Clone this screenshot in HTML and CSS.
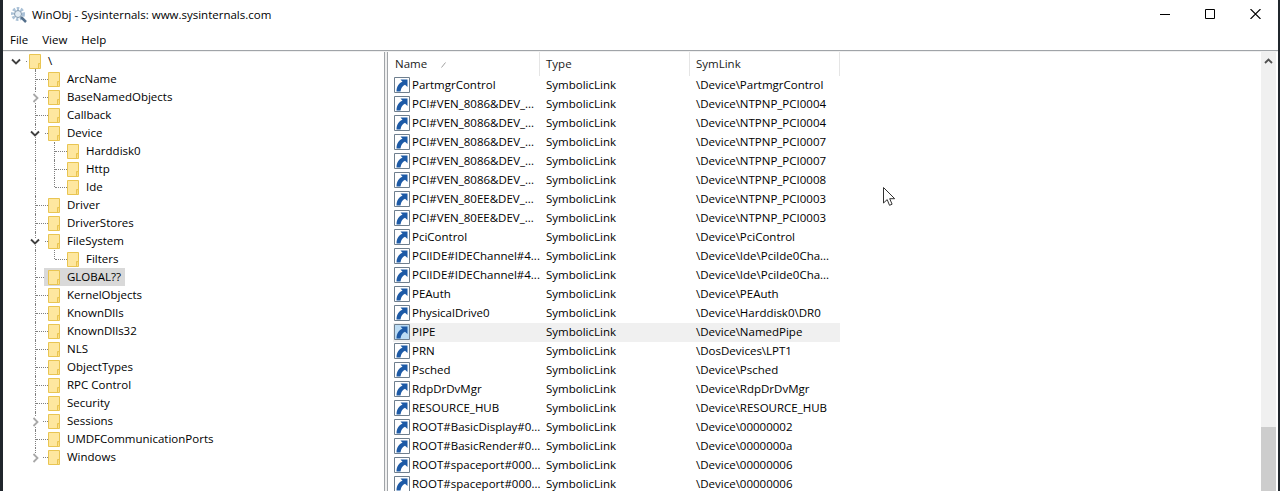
FILE: index.html
```html
<!DOCTYPE html>
<html lang="en">
<head>
    <meta charset="UTF-8">
    <title>WinObj - Sysinternals: www.sysinternals.com</title>
    <link rel="stylesheet" href="styles.css">
</head>
<body>

<svg class="sprites" width="0" height="0">
    <symbol id="folder" viewBox="0 0 12 15">
        <path d="M.5.5h11v14H.5z" fill="#fde390" stroke="#e9c552"/>
        <path d="M1 1h10v8H9v5H1z" fill="#fee79f"/>
        <path d="M9.5 14.5V9.500h2" fill="#fbd977" stroke="#e9c552"/>
    </symbol>
    <symbol id="open" viewBox="0 0 10 7">
        <path d="M1 1.500l4 4 4-4" fill="none" stroke="#404040" stroke-width="1.800"/>
    </symbol>
    <symbol id="closed" viewBox="0 0 7 10">
        <path d="M1.500 1l4 4-4 4" fill="none" stroke="#a8a8a8" stroke-width="1.800"/>
    </symbol>
    <symbol id="link" viewBox="0 0 16 16">
        <path d="M.5.5h15v15H.5z" fill="currentColor" stroke="#6f7f8e"/>
        <path d="M13.500 2.500V10L11 7.800C8.500 9 7 11 6.500 14.500h-4C2.500 9.500 5 6 8.500 4.800l-2-2.300z" fill="#1d5aa6"/>
    </symbol>
</svg>

<div class="window">
    <header class="titlebar">
        <svg class="app-icon" width="16" height="16" viewBox="0 0 16 16">
            <circle cx="7" cy="7" r="5.500" fill="none" stroke="#a9c0d6" stroke-width="3" stroke-dasharray="2.500 1.500"/>
            <circle cx="7" cy="7" r="3.500" fill="#e4edf4" stroke="#7d95ab"/>
            <path d="M10 10l5 5" stroke="#54708c" stroke-width="2.500"/>
        </svg>
        <span class="title">WinObj - Sysinternals: www.sysinternals.com</span>
        <div class="controls">
            <svg width="10" height="10" viewBox="0 0 10 10"><path d="M0 5.500h10" stroke="#000"/></svg>
            <svg width="10" height="10" viewBox="0 0 10 10"><path d="M.5.500h9v9h-9z" fill="none" stroke="#000"/></svg>
            <svg width="11" height="10" viewBox="0 0 11 10"><path d="M.5 0l10 10M10.500 0L.5 10" stroke="#000" stroke-width="1.100"/></svg>
        </div>
    </header>

    <nav class="menubar">
        <span>File</span>
        <span>View</span>
        <span>Help</span>
    </nav>

    <div class="panes">
        <ul class="tree">
            <li class="node-row"><span class="twig root"><svg class="chev-open"><use href="#open"/></svg></span><span class="node"><svg class="folder"><use href="#folder"/></svg>\</span></li>
            <li class="node-row"><span class="spacer"></span><span class="twig"></span><span class="node"><svg class="folder"><use href="#folder"/></svg>ArcName</span></li>
            <li class="node-row"><span class="spacer"></span><span class="twig"><svg class="chev-closed"><use href="#closed"/></svg></span><span class="node"><svg class="folder"><use href="#folder"/></svg>BaseNamedObjects</span></li>
            <li class="node-row"><span class="spacer"></span><span class="twig"></span><span class="node"><svg class="folder"><use href="#folder"/></svg>Callback</span></li>
            <li class="node-row"><span class="spacer"></span><span class="twig"><svg class="chev-open"><use href="#open"/></svg></span><span class="node"><svg class="folder"><use href="#folder"/></svg>Device</span></li>
            <li class="node-row"><span class="spacer"></span><span class="guide"></span><span class="twig"></span><span class="node"><svg class="folder"><use href="#folder"/></svg>Harddisk0</span></li>
            <li class="node-row"><span class="spacer"></span><span class="guide"></span><span class="twig"></span><span class="node"><svg class="folder"><use href="#folder"/></svg>Http</span></li>
            <li class="node-row"><span class="spacer"></span><span class="guide"></span><span class="twig last"></span><span class="node"><svg class="folder"><use href="#folder"/></svg>Ide</span></li>
            <li class="node-row"><span class="spacer"></span><span class="twig"></span><span class="node"><svg class="folder"><use href="#folder"/></svg>Driver</span></li>
            <li class="node-row"><span class="spacer"></span><span class="twig"></span><span class="node"><svg class="folder"><use href="#folder"/></svg>DriverStores</span></li>
            <li class="node-row"><span class="spacer"></span><span class="twig"><svg class="chev-open"><use href="#open"/></svg></span><span class="node"><svg class="folder"><use href="#folder"/></svg>FileSystem</span></li>
            <li class="node-row"><span class="spacer"></span><span class="guide"></span><span class="twig last"></span><span class="node"><svg class="folder"><use href="#folder"/></svg>Filters</span></li>
            <li class="node-row"><span class="spacer"></span><span class="twig"></span><span class="node selected"><svg class="folder"><use href="#folder"/></svg>GLOBAL??</span></li>
            <li class="node-row"><span class="spacer"></span><span class="twig"></span><span class="node"><svg class="folder"><use href="#folder"/></svg>KernelObjects</span></li>
            <li class="node-row"><span class="spacer"></span><span class="twig"></span><span class="node"><svg class="folder"><use href="#folder"/></svg>KnownDlls</span></li>
            <li class="node-row"><span class="spacer"></span><span class="twig"></span><span class="node"><svg class="folder"><use href="#folder"/></svg>KnownDlls32</span></li>
            <li class="node-row"><span class="spacer"></span><span class="twig"></span><span class="node"><svg class="folder"><use href="#folder"/></svg>NLS</span></li>
            <li class="node-row"><span class="spacer"></span><span class="twig"></span><span class="node"><svg class="folder"><use href="#folder"/></svg>ObjectTypes</span></li>
            <li class="node-row"><span class="spacer"></span><span class="twig"></span><span class="node"><svg class="folder"><use href="#folder"/></svg>RPC Control</span></li>
            <li class="node-row"><span class="spacer"></span><span class="twig"></span><span class="node"><svg class="folder"><use href="#folder"/></svg>Security</span></li>
            <li class="node-row"><span class="spacer"></span><span class="twig"><svg class="chev-closed"><use href="#closed"/></svg></span><span class="node"><svg class="folder"><use href="#folder"/></svg>Sessions</span></li>
            <li class="node-row"><span class="spacer"></span><span class="twig"></span><span class="node"><svg class="folder"><use href="#folder"/></svg>UMDFCommunicationPorts</span></li>
            <li class="node-row"><span class="spacer"></span><span class="twig last"><svg class="chev-closed"><use href="#closed"/></svg></span><span class="node"><svg class="folder"><use href="#folder"/></svg>Windows</span></li>
        </ul>

        <div class="splitter"></div>

        <section class="listview">
            <div class="list-body">
                <div class="list-head">
                    <div class="head-cell">Name<svg class="sort" width="5" height="6" viewBox="0 0 5 6"><path d="M.5 5.500l4-5" stroke="#a0a0a0"/></svg></div>
                    <div class="head-cell">Type</div>
                    <div class="head-cell">SymLink</div>
                </div>
                <div class="list-row"><div class="cell"><svg class="link"><use href="#link"/></svg>PartmgrControl</div><div class="cell">SymbolicLink</div><div class="cell">\Device\PartmgrControl</div></div>
                <div class="list-row"><div class="cell"><svg class="link"><use href="#link"/></svg>PCI#VEN_8086&amp;DEV_...</div><div class="cell">SymbolicLink</div><div class="cell">\Device\NTPNP_PCI0004</div></div>
                <div class="list-row"><div class="cell"><svg class="link"><use href="#link"/></svg>PCI#VEN_8086&amp;DEV_...</div><div class="cell">SymbolicLink</div><div class="cell">\Device\NTPNP_PCI0004</div></div>
                <div class="list-row"><div class="cell"><svg class="link"><use href="#link"/></svg>PCI#VEN_8086&amp;DEV_...</div><div class="cell">SymbolicLink</div><div class="cell">\Device\NTPNP_PCI0007</div></div>
                <div class="list-row"><div class="cell"><svg class="link"><use href="#link"/></svg>PCI#VEN_8086&amp;DEV_...</div><div class="cell">SymbolicLink</div><div class="cell">\Device\NTPNP_PCI0007</div></div>
                <div class="list-row"><div class="cell"><svg class="link"><use href="#link"/></svg>PCI#VEN_8086&amp;DEV_...</div><div class="cell">SymbolicLink</div><div class="cell">\Device\NTPNP_PCI0008</div></div>
                <div class="list-row"><div class="cell"><svg class="link"><use href="#link"/></svg>PCI#VEN_80EE&amp;DEV_...</div><div class="cell">SymbolicLink</div><div class="cell">\Device\NTPNP_PCI0003</div></div>
                <div class="list-row"><div class="cell"><svg class="link"><use href="#link"/></svg>PCI#VEN_80EE&amp;DEV_...</div><div class="cell">SymbolicLink</div><div class="cell">\Device\NTPNP_PCI0003</div></div>
                <div class="list-row"><div class="cell"><svg class="link"><use href="#link"/></svg>PciControl</div><div class="cell">SymbolicLink</div><div class="cell">\Device\PciControl</div></div>
                <div class="list-row"><div class="cell"><svg class="link"><use href="#link"/></svg>PCIIDE#IDEChannel#4...</div><div class="cell">SymbolicLink</div><div class="cell">\Device\Ide\PciIde0Cha...</div></div>
                <div class="list-row"><div class="cell"><svg class="link"><use href="#link"/></svg>PCIIDE#IDEChannel#4...</div><div class="cell">SymbolicLink</div><div class="cell">\Device\Ide\PciIde0Cha...</div></div>
                <div class="list-row"><div class="cell"><svg class="link"><use href="#link"/></svg>PEAuth</div><div class="cell">SymbolicLink</div><div class="cell">\Device\PEAuth</div></div>
                <div class="list-row"><div class="cell"><svg class="link"><use href="#link"/></svg>PhysicalDrive0</div><div class="cell">SymbolicLink</div><div class="cell">\Device\Harddisk0\DR0</div></div>
                <div class="list-row hot"><div class="cell"><svg class="link"><use href="#link"/></svg>PIPE</div><div class="cell">SymbolicLink</div><div class="cell">\Device\NamedPipe</div></div>
                <div class="list-row"><div class="cell"><svg class="link"><use href="#link"/></svg>PRN</div><div class="cell">SymbolicLink</div><div class="cell">\DosDevices\LPT1</div></div>
                <div class="list-row"><div class="cell"><svg class="link"><use href="#link"/></svg>Psched</div><div class="cell">SymbolicLink</div><div class="cell">\Device\Psched</div></div>
                <div class="list-row"><div class="cell"><svg class="link"><use href="#link"/></svg>RdpDrDvMgr</div><div class="cell">SymbolicLink</div><div class="cell">\Device\RdpDrDvMgr</div></div>
                <div class="list-row"><div class="cell"><svg class="link"><use href="#link"/></svg>RESOURCE_HUB</div><div class="cell">SymbolicLink</div><div class="cell">\Device\RESOURCE_HUB</div></div>
                <div class="list-row"><div class="cell"><svg class="link"><use href="#link"/></svg>ROOT#BasicDisplay#0...</div><div class="cell">SymbolicLink</div><div class="cell">\Device\00000002</div></div>
                <div class="list-row"><div class="cell"><svg class="link"><use href="#link"/></svg>ROOT#BasicRender#0...</div><div class="cell">SymbolicLink</div><div class="cell">\Device\0000000a</div></div>
                <div class="list-row"><div class="cell"><svg class="link"><use href="#link"/></svg>ROOT#spaceport#000...</div><div class="cell">SymbolicLink</div><div class="cell">\Device\00000006</div></div>
                <div class="list-row"><div class="cell"><svg class="link"><use href="#link"/></svg>ROOT#spaceport#000...</div><div class="cell">SymbolicLink</div><div class="cell">\Device\00000006</div></div>
            </div>

            <div class="scrollbar">
                <div class="scroll-up">
                    <svg width="9" height="6" viewBox="0 0 9 6"><path d="M1 5l3.500-3.500L8 5" fill="none" stroke="#505050" stroke-width="1.800"/></svg>
                </div>
                <div class="scroll-thumb"></div>
            </div>

            <!-- mouse pointer caught in the screenshot -->
            <svg class="pointer" width="12" height="20" viewBox="0 0 12 20">
                <path d="M.5.500v15.500l3.700-3.400 2.300 5.700 2.600-1.100-2.400-5.500h5z" fill="#fff" stroke="#333"/>
            </svg>
        </section>
    </div>
</div>

</body>
</html>
```

FILE: styles.css
```css
* {
    box-sizing: border-box;
}

body {
    margin: 0;
    height: 491px;
    overflow: hidden;
    padding: 0 2px 0 3px;
    background-color: #20262c;
    font-family: 'Open Sans', sans-serif;
    font-size: 11.5px;
    color: #000;
}

.sprites {
    display: block;
    height: 0;
}

.window {
    height: 491px;
    display: flex;
    flex-direction: column;
    background-color: white;
}

.titlebar {
    height: 30px;
    flex: none;
    display: flex;
    align-items: center;
    padding-left: 8px;
}

.app-icon {
    margin-right: 5px;
}

.title {
    flex: 1;
    margin-bottom: 2px;
}

.controls {
    display: flex;
    gap: 35px;
    padding-right: 17px;
    margin-bottom: 2px;
}

.menubar {
    height: 20px;
    flex: none;
    display: flex;
    gap: 14px;
    align-items: center;
    padding: 0 0 2px 7px;
}

.panes {
    flex: 1;
    min-height: 0;
    display: flex;
    border-top: 1px solid #a0a4a8;
    background-color: #f0f0f0;
    padding-top: 1px;
}

/* left side: object tree */

.tree {
    width: 381px;
    flex: none;
    list-style: none;
    margin: 0;
    padding: 0 0 0 4px;
    background-color: white;
    overflow: hidden;
}

.node-row {
    height: 18px;
    display: flex;
    white-space: nowrap;
}

.spacer,
.guide {
    width: 19px;
    flex: none;
    position: relative;
}

.twig {
    width: 22px;
    flex: none;
    position: relative;
}

.twig::before,
.guide::before {
    content: '';
    position: absolute;
    left: 9px;
    top: 0;
    bottom: 0;
    border-left: 1px dotted #808080;
}

.twig::after {
    content: '';
    position: absolute;
    left: 10px;
    right: 0;
    top: 9px;
    border-top: 1px dotted #808080;
}

.twig.last::before {
    bottom: 9px;
}

.twig.root::before {
    top: 16px;
    left: 28px;
}

.twig.root::after {
    left: 17px;
    right: 2px;
}

.chev-open,
.chev-closed {
    position: absolute;
    z-index: 1;
    background-color: white;
    box-shadow: 4px 0 0 white;
}

.chev-open {
    width: 10px;
    height: 7px;
    left: 4px;
    top: 6px;
}

.chev-closed {
    width: 7px;
    height: 10px;
    left: 6px;
    top: 5px;
}

.twig.root .chev-open {
    left: 4px;
}

.node {
    display: flex;
    align-items: center;
    gap: 7px;
    height: 18px;
    margin-left: -4px;
    padding: 0 4px 2px;
    position: relative;
}

.node.selected {
    background-color: #d9d9d9;
}

.folder {
    width: 12px;
    height: 15px;
    margin-top: 2px;
    flex: none;
}

/* splitter between the panes */

.splitter {
    width: 4px;
    flex: none;
    border-left: 1px solid #a0a4a8;
    border-right: 1px solid #a0a4a8;
}

/* right side: list view */

.listview {
    flex: 1;
    min-width: 0;
    display: flex;
    background-color: white;
    position: relative;
    overflow: hidden;
}

.list-body {
    flex: 1;
    min-width: 0;
}

.list-head {
    height: 24px;
    display: grid;
    grid-template-columns: 152px 150px 150px;
    width: 452px;
}

.head-cell {
    padding-left: 6px;
    padding-top: 4px;
    border-right: 1px solid #e5e5e5;
    display: flex;
    align-items: flex-start;
    color: #1a1a1a;
}

.head-cell:first-child {
    padding-left: 7px;
}

.sort {
    margin: 6px 0 0 14px;
}

.list-row {
    height: 19px;
    display: grid;
    grid-template-columns: 147px 150px 150px;
    grid-template-rows: 19px;
    width: 447px;
    margin-left: 5px;
}

.list-row.hot {
    background-color: #f0f0f0;
}

.cell {
    display: flex;
    align-items: center;
    padding: 0 0 2px 6px;
    white-space: nowrap;
    color: #000;
}

.cell:first-child {
    padding-left: 1px;
}

.link {
    width: 16px;
    height: 16px;
    margin: 1px 2px 0 0;
    flex: none;
    color: white;
}

.hot .link {
    color: #bcdcf4;
}

.scrollbar {
    width: 15px;
    flex: none;
    margin-right: 2px;
    background-color: #f0f0f0;
    display: flex;
    flex-direction: column;
    justify-content: space-between;
}

.scroll-up {
    height: 17px;
    display: flex;
    align-items: center;
    justify-content: center;
}

.scroll-thumb {
    height: 64px;
    background-color: #cdcdcd;
}

.pointer {
    position: absolute;
    left: 495px;
    top: 135px;
}
```
